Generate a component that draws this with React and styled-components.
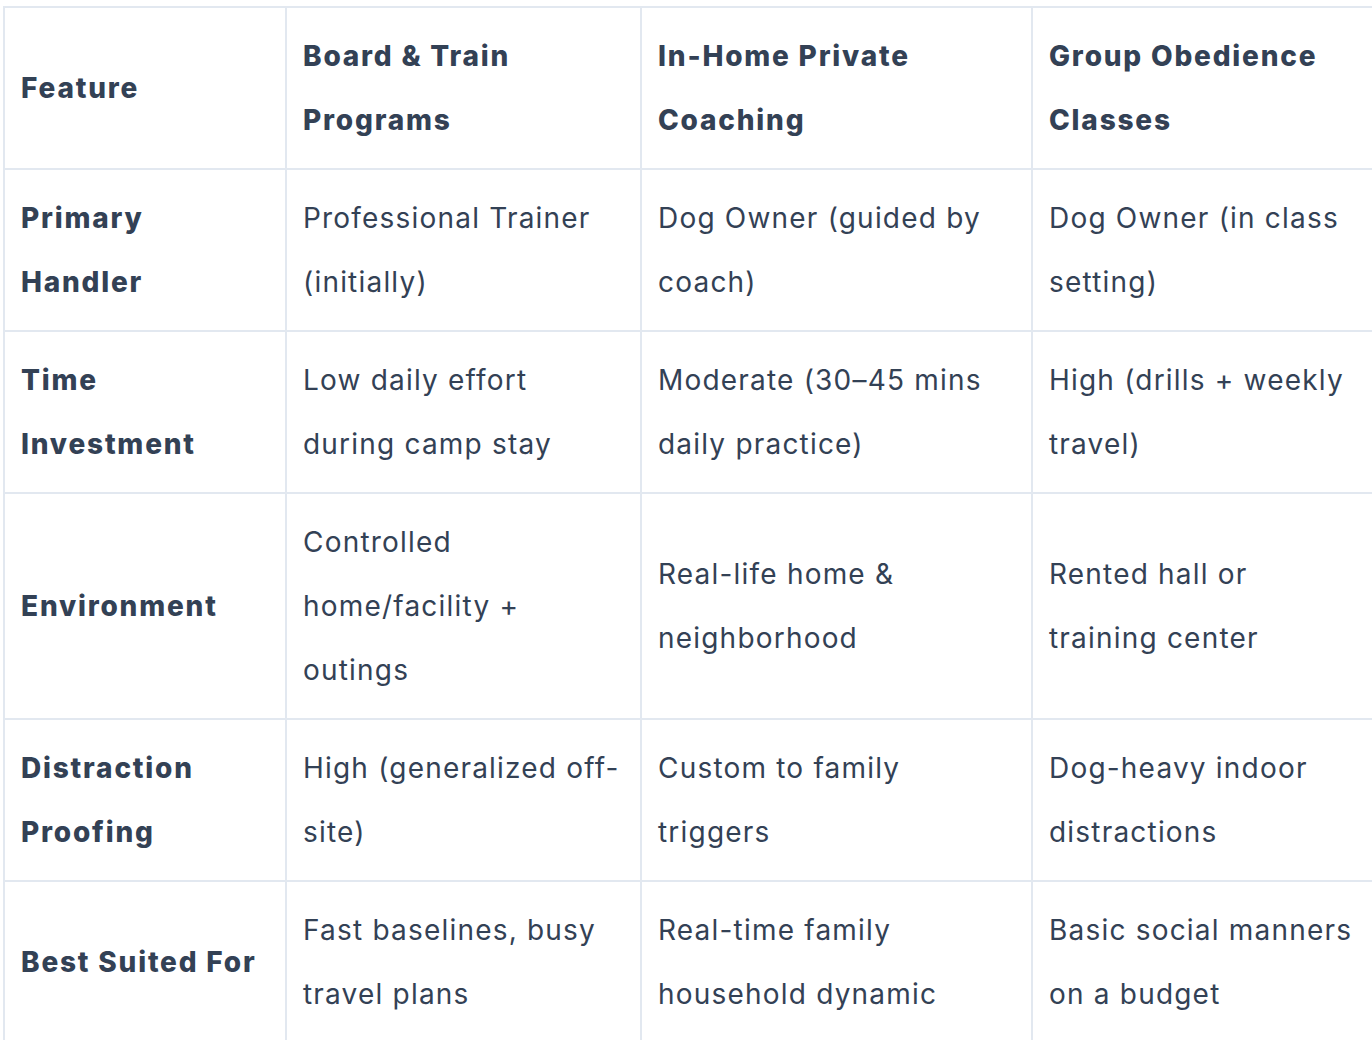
import React from 'react';
import styled, { createGlobalStyle } from 'styled-components';

const GlobalStyle = createGlobalStyle`
  html, body {
    margin: 0;
    padding: 0;
    background: #fff;
    overflow: hidden;
  }
  body {
    font-family: Inter, "Noto Sans", sans-serif;
    color: #334155;
  }
`;

const Wrapper = styled.div`
  padding: 6px 0 0 3px;
  width: 1500px;
`;

const Table = styled.table`
  border-collapse: collapse;
  table-layout: fixed;
  width: ${props => props.width}px;
  font-size: 28px;
  line-height: 64px;
`;

const Cell = styled.td`
  border: 2px solid #e2e8f0;
  padding: 16px ${props => (props.first ? 20 : 16)}px 16px 16px;
  vertical-align: middle;
  text-align: left;
  font-weight: ${props => (props.first ? 800 : 400)};
  letter-spacing: ${props => (props.first ? 1.8 : 1.2)}px;
  color: #334155;
`;

const HeadCell = styled(Cell).attrs({ as: 'th' })`
  font-weight: 800;
  letter-spacing: 1.8px;
`;

const columns = [282, 355, 391, 345];

const header = ['Feature', 'Board & Train Programs', 'In-Home Private Coaching', 'Group Obedience Classes'];

const rows = [
  ['Primary Handler', 'Professional Trainer (initially)', 'Dog Owner (guided by coach)', 'Dog Owner (in class setting)'],
  ['Time Investment', 'Low daily effort during camp stay', 'Moderate (30–45 mins daily practice)', 'High (drills + weekly travel)'],
  ['Environment', 'Controlled home/facility + outings', 'Real-life home & neighborhood', 'Rented hall or training center'],
  ['Distraction Proofing', 'High (generalized off-site)', 'Custom to family triggers', 'Dog-heavy indoor distractions'],
  ['Best Suited For', 'Fast baselines, busy travel plans', 'Real-time family household dynamic', 'Basic social manners on a budget'],
];

function App() {
  return (
    <Wrapper>
      <GlobalStyle />
      <Table width={columns.reduce((a, b) => a + b, 0)}>
        <colgroup>
          {columns.map((w, i) => (
            <col key={i} style={{ width: w }} />
          ))}
        </colgroup>
        <thead>
          <tr>
            {header.map((h, i) => (
              <HeadCell key={h} first={i === 0}>{h}</HeadCell>
            ))}
          </tr>
        </thead>
        <tbody>
          {rows.map(row => (
            <tr key={row[0]}>
              {row.map((c, i) => (
                <Cell key={i} first={i === 0}>{c}</Cell>
              ))}
            </tr>
          ))}
        </tbody>
      </Table>
    </Wrapper>
  );
}

export default App;
